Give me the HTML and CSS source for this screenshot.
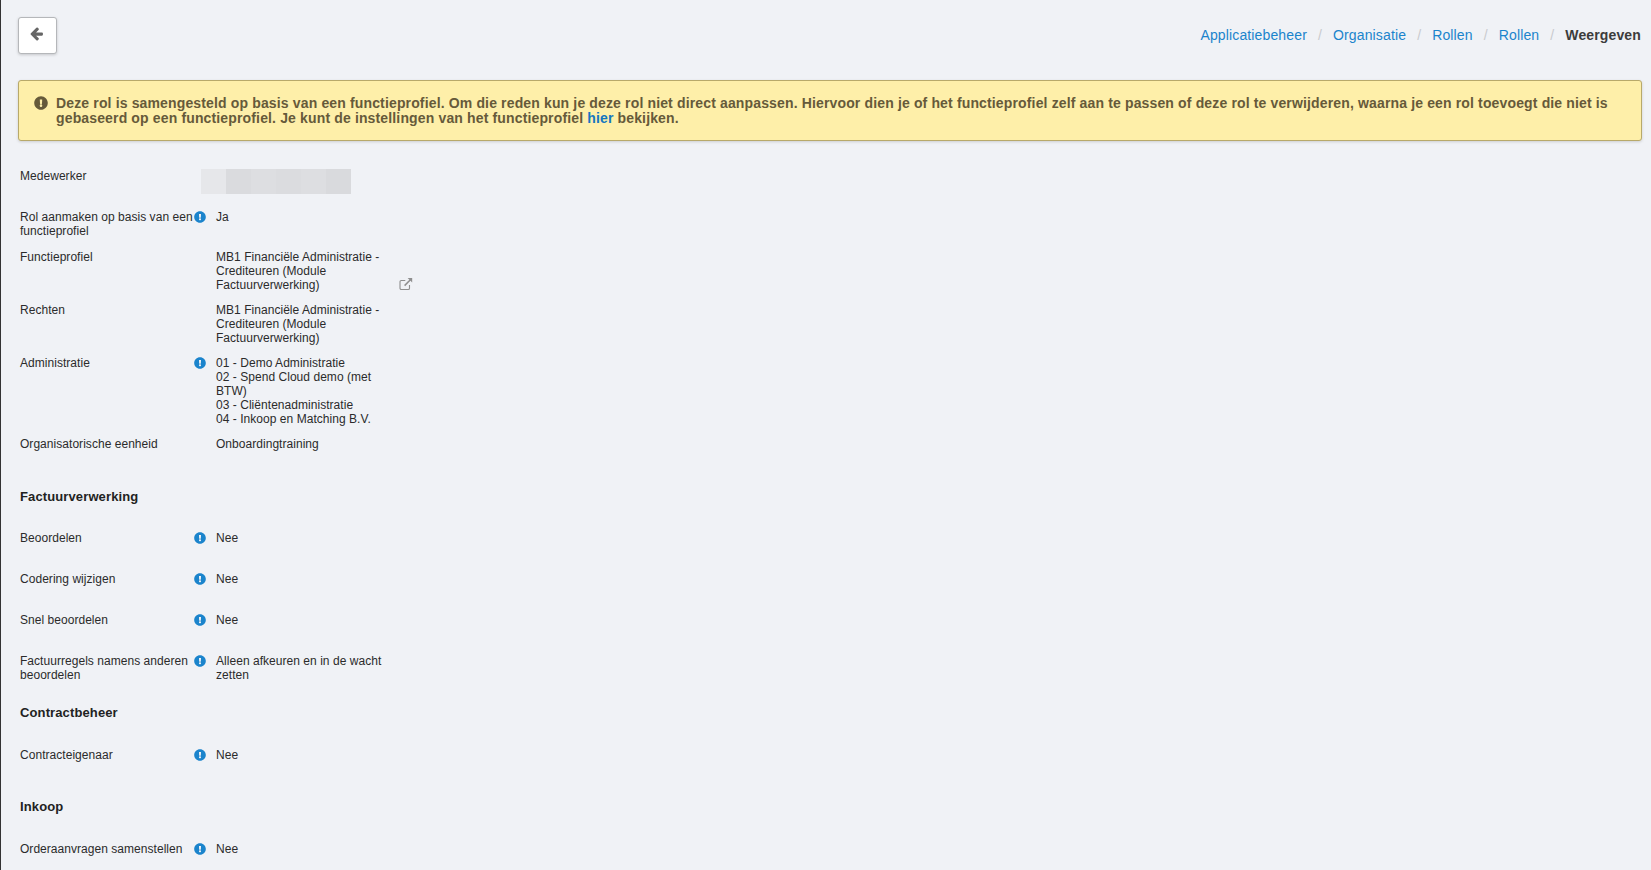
FILE: index.html
```html
<!DOCTYPE html>
<html lang="nl">
<head>
<meta charset="utf-8">
<title>Rol weergeven</title>
<link rel="stylesheet" href="styles.css">
</head>
<body>
<svg class="defs" aria-hidden="true">
  <symbol id="i-exc" viewBox="0 0 512 512"><path fill="currentColor" d="M504 256c0 136.997-111.043 248-248 248S8 392.997 8 256C8 119.083 119.043 8 256 8s248 111.083 248 248zm-248 50c-25.405 0-46 20.595-46 46s20.595 46 46 46 46-20.595 46-46-20.595-46-46-46zm-43.673-165.346l7.418 136c.347 6.364 5.609 11.346 11.982 11.346h48.546c6.373 0 11.635-4.982 11.982-11.346l7.418-136c.375-6.874-5.098-12.654-11.982-12.654h-63.383c-6.884 0-12.356 5.78-11.981 12.654z"/></symbol>
</svg>
<main class="page">
  <header class="top">
    <button class="back" type="button" aria-label="Terug">
      <svg class="back-icon" viewBox="0 0 1792 1792"><path fill="currentColor" d="M1664 896v128q0 53-32.5 90.5t-84.5 37.5h-704l293 294q38 36 38 90t-38 90l-75 76q-37 37-90 37-52 0-91-37l-651-652q-37-37-37-90 0-52 37-91l651-650q38-38 91-38 52 0 90 38l75 74q38 38 38 91t-38 91l-293 293h704q52 0 84.5 37.5t32.5 90.5z"/></svg>
    </button>
    <nav class="crumbs">
      <a href="#">Applicatiebeheer</a><span class="sep">/</span>
      <a href="#">Organisatie</a><span class="sep">/</span>
      <a href="#">Rollen</a><span class="sep">/</span>
      <a href="#">Rollen</a><span class="sep">/</span>
      <strong>Weergeven</strong>
    </nav>
  </header>

  <section class="alert">
    <svg class="alert-icon"><use href="#i-exc"/></svg>
    <p>Deze rol is samengesteld op basis van een functieprofiel. Om die reden kun je deze rol niet direct aanpassen. Hiervoor dien je of het functieprofiel zelf aan te passen of deze rol te verwijderen, waarna je een rol toevoegt die niet is gebaseerd op een functieprofiel. Je kunt de instellingen van het functieprofiel <a href="#">hier</a> bekijken.</p>
  </section>

  <section class="details">
    <div class="row row-emp">
      <div class="label">Medewerker</div>
      <div class="blur"><i class="b1"></i><i class="b2"></i><i class="b3"></i><i class="b4"></i><i class="b3"></i><i class="b5"></i></div>
    </div>
    <div class="row row-rol">
      <div class="label"><span>Rol aanmaken op basis van een functieprofiel</span><svg class="info"><use href="#i-exc"/></svg></div>
      <div class="value">Ja</div>
    </div>
    <div class="row">
      <div class="label"><span>Functieprofiel</span></div>
      <div class="value">MB1 Financiële Administratie - Crediteuren (Module Factuurverwerking)</div>
      <svg class="ext" viewBox="0 0 14 14"><path d="M10.5 8v3.2a1.3 1.3 0 0 1-1.3 1.3H2.3A1.3 1.3 0 0 1 1 11.2V4.8a1.3 1.3 0 0 1 1.3-1.3h4" fill="none" stroke="currentColor" stroke-width="1.1"/><path d="M5.6 8.6 11.4 2.8" fill="none" stroke="currentColor" stroke-width="1.5"/><path d="M8.6 1h4.6v4.6z" fill="currentColor"/></svg>
    </div>
    <div class="row">
      <div class="label"><span>Rechten</span></div>
      <div class="value">MB1 Financiële Administratie - Crediteuren (Module Factuurverwerking)</div>
    </div>
    <div class="row">
      <div class="label"><span>Administratie</span><svg class="info"><use href="#i-exc"/></svg></div>
      <div class="value">01 - Demo Administratie<br>02 - Spend Cloud demo (met BTW)<br>03 - Cliëntenadministratie<br>04 - Inkoop en Matching B.V.</div>
    </div>
    <div class="row">
      <div class="label"><span>Organisatorische eenheid</span></div>
      <div class="value">Onboardingtraining</div>
    </div>

    <h2 class="head head-1">Factuurverwerking</h2>
    <div class="row row-loose">
      <div class="label"><span>Beoordelen</span><svg class="info"><use href="#i-exc"/></svg></div>
      <div class="value">Nee</div>
    </div>
    <div class="row row-loose">
      <div class="label"><span>Codering wijzigen</span><svg class="info"><use href="#i-exc"/></svg></div>
      <div class="value">Nee</div>
    </div>
    <div class="row row-loose">
      <div class="label"><span>Snel beoordelen</span><svg class="info"><use href="#i-exc"/></svg></div>
      <div class="value">Nee</div>
    </div>
    <div class="row row-loose">
      <div class="label"><span>Factuurregels namens anderen beoordelen</span><svg class="info"><use href="#i-exc"/></svg></div>
      <div class="value">Alleen afkeuren en in de wacht zetten</div>
    </div>

    <h2 class="head head-2">Contractbeheer</h2>
    <div class="row row-loose">
      <div class="label"><span>Contracteigenaar</span><svg class="info"><use href="#i-exc"/></svg></div>
      <div class="value">Nee</div>
    </div>

    <h2 class="head head-3">Inkoop</h2>
    <div class="row row-loose">
      <div class="label"><span>Orderaanvragen samenstellen</span><svg class="info"><use href="#i-exc"/></svg></div>
      <div class="value">Nee</div>
    </div>
  </section>
</main>
</body>
</html>
```
FILE: styles.css
```css
* { box-sizing: border-box; }
html, body { height: 100%; }
body {
  margin: 0;
  overflow: hidden;
  background: #f0f2f6;
  border-left: 1px solid #333;
  font-family: "Liberation Sans", Arial, sans-serif;
  font-size: 12px;
  line-height: 14px;
  letter-spacing: .04px;
  color: #2b2b2b;
}
.defs { width: 0; height: 0; position: absolute; }
.page { padding: 17px 9px 0 17px; }
.top { display: flex; justify-content: space-between; align-items: flex-start; height: 63px; }
.back {
  width: 39px;
  height: 37px;
  padding: 0;
  background: #fff;
  border: 1px solid #b5b7ba;
  border-radius: 3px;
  box-shadow: 0 1px 3px rgba(0,0,0,.18);
  color: #666;
  display: flex;
  align-items: center;
  justify-content: center;
}
.back-icon { width: 15px; height: 15px; margin: -4px 3px 0 0; }
.crumbs {
  display: flex;
  font-size: 14px;
  line-height: 16px;
  letter-spacing: .14px;
  margin: 10px 1px 0 0;
  color: #c9cbce;
  white-space: nowrap;
}
.crumbs a { color: #1b84cc; text-decoration: none; }
.crumbs strong { color: #3c3c3c; }
.sep { display: block; margin: 0 11px; }
.alert {
  display: flex;
  align-items: flex-start;
  height: 61px;
  padding: 15px 30px 0 15px;
  background: #feefa9;
  border: 1px solid #b8a96a;
  border-radius: 3px;
  box-shadow: 0 1px 3px rgba(0,0,0,.15);
  color: #665a3a;
  font-size: 14px;
  font-weight: 700;
  line-height: 15px;
}
.alert p { margin: 0; letter-spacing: .145px; }
.alert a { color: #1576c0; text-decoration: none; }
.alert-icon { flex: none; width: 14px; height: 14px; margin: 0 8px 0 0; color: #665a3a; }
.details { padding: 0 0 0 2px; margin-top: 28px; }
.row { display: flex; align-items: flex-start; margin-bottom: 11px; }
.row-emp { margin-bottom: 16px; height: 25px; }
.row-rol { margin-bottom: 12px; }
.label { flex: none; width: 196px; display: flex; justify-content: space-between; padding-right: 10px; }
.label span { display: block; width: 174px; }
.row-emp .label { width: 181px; }
.blur { display: flex; height: 25px; }
.blur i { display: block; width: 25px; height: 25px; }
.b1 { background: #e6e7ea; }
.b2 { background: #dadbde; }
.b3 { background: #dddee1; }
.b4 { background: #dbdcdf; }
.b5 { background: #d9dadd; }
.info { flex: none; width: 12px; height: 12px; margin-top: 1px; color: #1b84cc; }
.value { width: 168px; }
.ext { flex: none; align-self: flex-end; width: 14px; height: 14px; margin: 0 0 1px 15px; color: #8f8f8f; }
.head { margin: 0; font-size: 13px; line-height: 15px; font-weight: 700; letter-spacing: .12px; color: #222; }
.head-1 { margin-top: 38px; margin-bottom: 27px; }
.head-2 { margin-top: -4px; margin-bottom: 28px; }
.head-3 { margin-top: 37px; margin-bottom: 28px; }
.row-loose { margin-bottom: 27px; }
```
